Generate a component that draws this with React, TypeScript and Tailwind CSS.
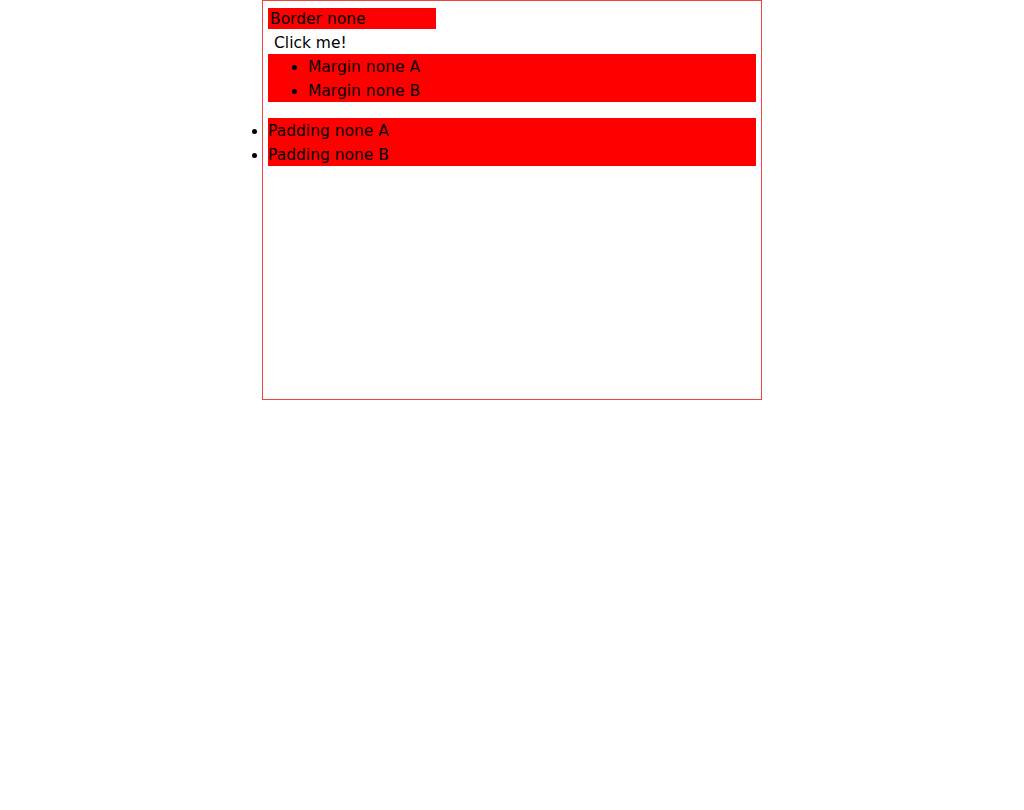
import React from "react";

export default function App() {
  return (
    <div className="min-h-screen bg-white font-['DejaVu_Sans',sans-serif] text-[15.5px] text-black">
      <div className="mx-auto box-border h-[400px] w-[500px] border border-[#f0443a] p-[5px]">
        {/* input with no border */}
        <div className="flex h-[25px] items-start pt-[2px]">
          <input
            readOnly
            value="Border none"
            className="h-[21px] w-[168px] border-0 bg-[#ff0000] px-[2px] pt-[1px] text-[15.5px] leading-[20px] text-black outline-none"
          />
        </div>
        {/* button with no border */}
        <button className="flex h-[23px] items-center border-0 bg-transparent px-[6px] pt-[2px] text-[15.5px] font-medium text-black">
          Click me!
        </button>
        {/* list without margin */}
        <ul className="m-0 box-border h-12 list-disc bg-[#ff0000] pl-10 pt-[1px] leading-6">
          <li>Margin none A</li>
          <li>Margin none B</li>
        </ul>
        {/* list without padding */}
        <ul className="mt-4 box-border h-12 list-disc list-outside bg-[#ff0000] p-0 pt-[1px] leading-6">
          <li>Padding none A</li>
          <li>Padding none B</li>
        </ul>
      </div>
    </div>
  );
}
